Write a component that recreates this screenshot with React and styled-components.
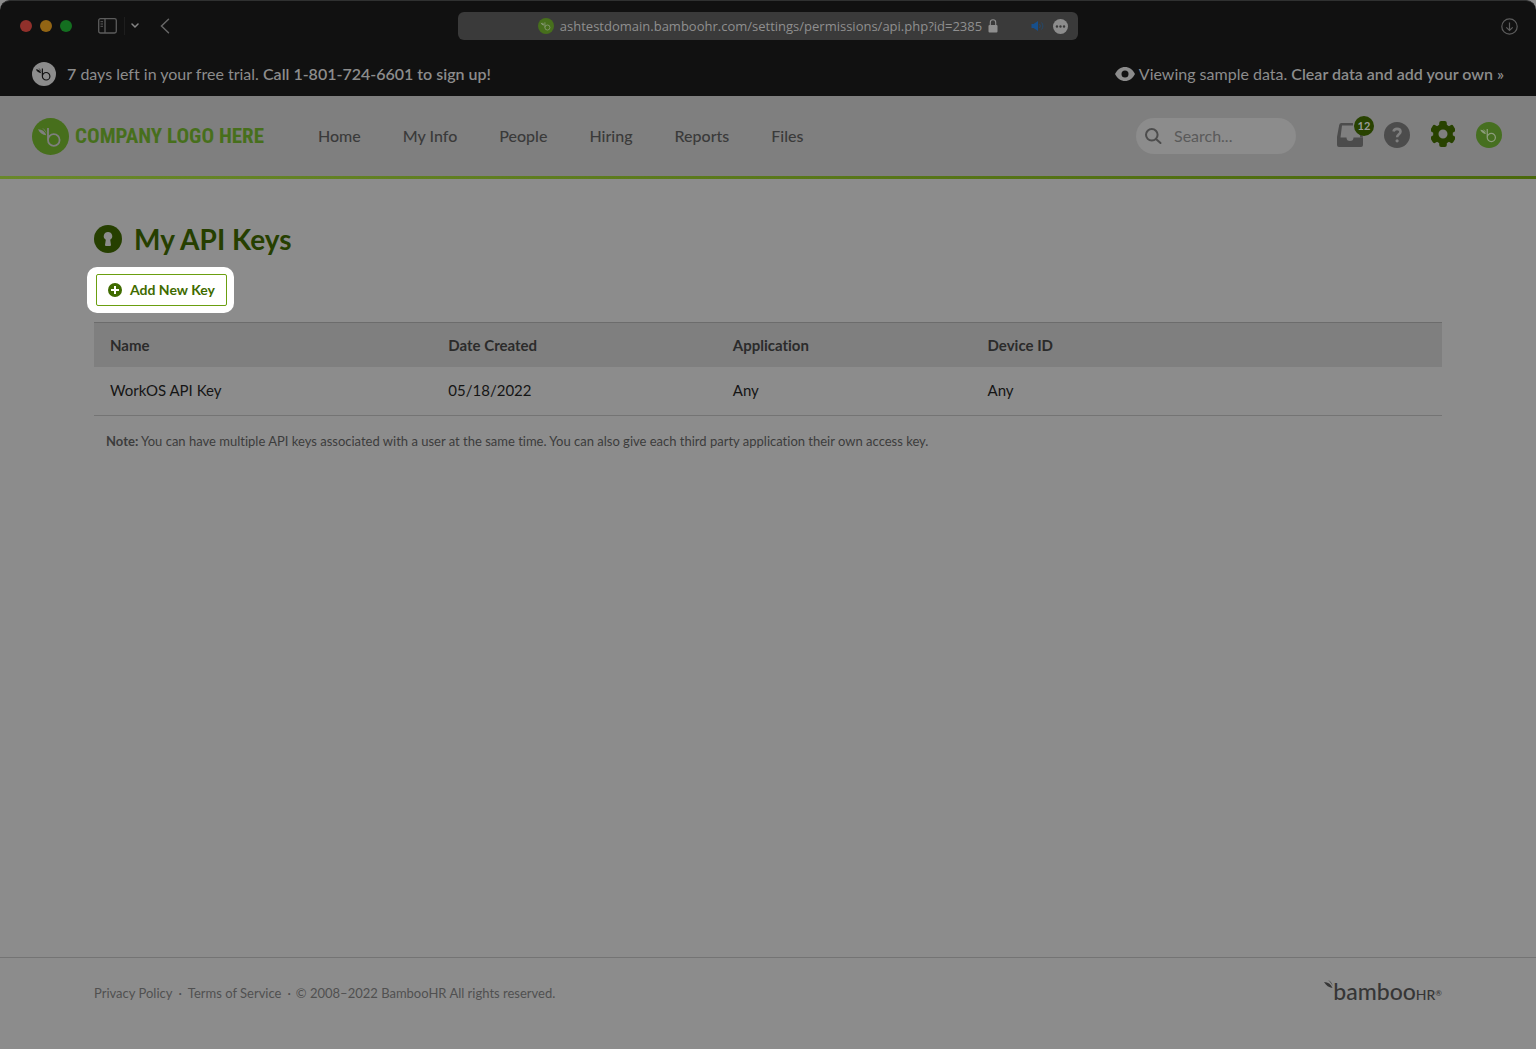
import React from 'react';
import styled, { createGlobalStyle } from 'styled-components';

const GlobalStyle = createGlobalStyle`
  * {
    box-sizing: border-box;
  }

  body {
    margin: 0;
    background: #8c8c8c;
    font-family: Lato, sans-serif;
    font-size: 16px;
    font-variant-ligatures: no-common-ligatures;
    line-height: 20px;
    color: #151515;
  }

  a {
    color: inherit;
    text-decoration: none;
  }

  button, input {
    font-family: inherit;
  }

  svg {
    display: block;
    flex: none;
  }
`;

const Page = styled.div`
  min-height: 100vh;
  display: flex;
  flex-direction: column;
`;

const TopArea = styled.div`
  background: #111;
  border-top: 1px solid #303131;
  border-radius: 10px 10px 0 0;
`;

const BrowserBar = styled.div`
  height: 50px;
  padding: 0 18px;
  display: grid;
  grid-template-columns: 1fr minmax(0, 620px) 1fr;
  align-items: center;
`;

const BarLeft = styled.div`
  padding-left: 2px;
  display: flex;
  align-items: center;
`;

const Lights = styled.div`
  display: flex;
  gap: 8px;
  margin-right: 26px;
`;

const Light = styled.span`
  width: 12px;
  height: 12px;
  border-radius: 50%;
  background: ${({ $color }) => $color};
`;

const IconButton = styled.button`
  display: flex;
  padding: 0;
  border: 0;
  background: none;
  color: ${({ $color }) => $color || '#5c5c5c'};
`;

const BarDivider = styled.span`
  width: 1px;
  height: 18px;
  margin: 0 6px 0 7px;
  background: #1e1e1e;
`;

const BackButton = styled(IconButton)`
  margin-left: 21px;
`;

const DownloadButton = styled(IconButton)`
  justify-self: end;
`;

const AddressBar = styled.div`
  height: 28px;
  padding: 0 10px;
  border-radius: 6px;
  background: #3a3a3a;
  color: #8f8f8f;
  display: grid;
  grid-template-columns: 38px 1fr 38px;
  align-items: center;
`;

const Address = styled.div`
  grid-column: 2;
  display: flex;
  align-items: center;
  justify-content: center;
  gap: 6px;
  font-family: 'Open Sans', sans-serif;
  font-size: 13px;
  font-weight: 500;
  white-space: nowrap;
`;

const AddressTools = styled.div`
  display: flex;
  align-items: center;
  justify-content: flex-end;
  gap: 8px;
`;

const TrialBar = styled.div`
  height: 45px;
  padding: 1px 32px 0;
  display: flex;
  align-items: center;
  justify-content: space-between;
  color: #8c8c8c;
`;

const TrialText = styled.div`
  display: flex;
  align-items: center;
  gap: ${({ $gap }) => $gap};

  strong, a {
    font-weight: 600;
  }
`;

const Header = styled.header`
  height: 83px;
  padding: 0 34px 0 32px;
  display: flex;
  align-items: center;
  background: #7f7f7f;
  border-bottom: 3px solid;
  border-image: linear-gradient(to right, #69882a, #4a690b) 1;
`;

const Logo = styled.a`
  width: 286px;
  display: flex;
  align-items: center;
  gap: 6px;
  color: #476f1c;
  font-family: 'Roboto Condensed', 'Liberation Sans Narrow', 'Liberation Sans', sans-serif;
  font-size: 21px;
  font-weight: 700;
  line-height: 36px;
  white-space: nowrap;
`;

const Nav = styled.nav`
  flex: 1;
  display: flex;
  gap: 42px;
  color: #3a3a3a;
  font-weight: 500;
  white-space: nowrap;
`;

const Search = styled.label`
  width: 160px;
  height: 36px;
  padding: 0 9px;
  display: flex;
  align-items: center;
  gap: 12px;
  border-radius: 18px;
  background: #8c8c8c;
  color: #545454;

  input {
    width: 100%;
    min-width: 0;
    padding: 0;
    border: 0;
    outline: 0;
    background: none;
    color: inherit;
    font-size: 16px;
    line-height: 20px;
  }

  input::placeholder {
    color: #5a5a5a;
    opacity: 1;
  }
`;

const HeaderIcons = styled.div`
  margin: 0 0 2px 41px;
  display: flex;
  align-items: center;
  gap: 21px;
`;

const InboxButton = styled(IconButton)`
  position: relative;
`;

const Badge = styled.span`
  position: absolute;
  top: -6px;
  right: -11px;
  width: 20px;
  height: 20px;
  border-radius: 50%;
  background: #284200;
  color: #9a9a9a;
  font-size: 11px;
  font-weight: 700;
  line-height: 20px;
  text-align: center;
`;

const Main = styled.main`
  flex: 1;
  padding: 42px 94px 0;
`;

const Title = styled.h1`
  margin: 0;
  display: flex;
  align-items: center;
  gap: 12px;
  color: #263f00;
  font-size: 28px;
  font-weight: 700;
  line-height: 36px;
`;

const Spotlight = styled.div`
  width: fit-content;
  margin: 10px 0 9px -7px;
  padding: 7px 7px 7px 9px;
  border-radius: 10px;
  background: #fff;
`;

const AddButton = styled.button`
  height: 32px;
  padding: 0 11px;
  display: flex;
  align-items: center;
  gap: 8px;
  border: 1px solid #6b9f10;
  border-radius: 2px;
  background: #fff;
  color: #3f6b00;
  font-size: 14px;
  font-weight: 700;
  line-height: 20px;
`;

const KeyTable = styled.table`
  width: 100%;
  table-layout: fixed;
  border-collapse: separate;
  border-spacing: 0;
  font-size: 15px;
  text-align: left;

  th, td {
    padding: 0 16px;
  }

  th {
    height: 45px;
    border-top: 1px solid #6c6c6c;
    background: #7f7f7f;
    color: #2b2b2b;
    font-weight: 700;
  }

  td {
    height: 49px;
    padding-bottom: 2px;
    border-bottom: 1px solid #747474;
  }
`;

const Col = styled.col`
  width: ${({ $width }) => $width};
`;

const Note = styled.p`
  margin: 15px 12px;
  color: #3c3c3c;
  font-size: 13px;
  line-height: 20px;

  strong {
    font-weight: 700;
  }
`;

const Footer = styled.footer`
  height: 92px;
  padding: 0 94px 22px;
  display: flex;
  align-items: center;
  justify-content: space-between;
  border-top: 1px solid #747474;
  color: #505050;
  font-size: 13px;
`;

const Legal = styled.div`
  display: flex;
  gap: 6px;
`;

const Copyright = styled.span`
  display: flex;
  gap: 5px;
`;

const Wordmark = styled.a`
  display: flex;
  align-items: baseline;
  color: #363636;
  font-size: 23px;
  font-weight: 500;
  line-height: 24px;

  small {
    font-size: 14px;
  }

  sup {
    align-self: center;
    font-size: 8px;
    line-height: 8px;
  }
`;

const Leaves = styled.svg`
  align-self: flex-start;
`;

const BambooMark = ({ size, bg, fg }) => (
  <svg width={size} height={size} viewBox="0 0 37 37" aria-hidden="true">
    <circle cx="18.5" cy="18.5" r="18.5" fill={bg} />
    <path d="M16 10v12a5.8 5.8 0 1 0 5.8-5.8A5.8 5.8 0 0 0 16 22" fill="none" stroke={fg} strokeWidth="1.8" />
    <path d="M6 11.2c4 .2 7 2 8.2 6-3.6-.2-6.6-2.2-8.2-6zM9.8 9.8c2.6 1 4.2 3 4.8 6-1.2-2.4-2.8-4.2-4.8-6z" fill={fg} />
  </svg>
);

const navItems = ['Home', 'My Info', 'People', 'Hiring', 'Reports', 'Files'];

const gearTeeth = [0, 60, 120, 180, 240, 300];

const columns = [
  { label: 'Name', width: '25.1%' },
  { label: 'Date Created', width: '21.1%' },
  { label: 'Application', width: '18.9%' },
  { label: 'Device ID' },
];

const keys = [['WorkOS API Key', '05/18/2022', 'Any', 'Any']];

const App = () => {
  return (
    <>
      <GlobalStyle />
      <Page>
        <TopArea>
          <BrowserBar>
            <BarLeft>
              <Lights>
                <Light $color="#91302b" />
                <Light $color="#936514" />
                <Light $color="#146f20" />
              </Lights>
              <IconButton aria-label="Sidebar">
                <svg width="19" height="16" viewBox="0 0 19 16" fill="none" stroke="currentColor">
                  <rect x="0.7" y="0.7" width="17.6" height="14.3" rx="1.8" strokeWidth="1.3" />
                  <path d="M7 1v14" strokeWidth="1.3" />
                  <path d="M2.5 3.7H5M2.5 6H5M2.5 8.3H5" />
                </svg>
              </IconButton>
              <BarDivider />
              <IconButton aria-label="Tab groups" $color="#858585">
                <svg width="8" height="6" viewBox="0 0 8 6" fill="none" stroke="currentColor" strokeWidth="1.5" strokeLinecap="round">
                  <path d="M1 1l3 3 3-3" />
                </svg>
              </IconButton>
              <BackButton aria-label="Back" $color="#666">
                <svg width="10" height="16" viewBox="0 0 10 16" fill="none" stroke="currentColor" strokeWidth="1.5" strokeLinecap="round">
                  <path d="M8.5 1.2L1.5 8l7 6.8" />
                </svg>
              </BackButton>
            </BarLeft>
            <AddressBar>
              <Address>
                <BambooMark size={16} bg="#476f1c" fg="#8c9c7c" />
                <span>ashtestdomain.bamboohr.com/settings/permissions/api.php?id=2385</span>
                <svg width="10" height="14" viewBox="0 0 10 14">
                  <rect x="0.5" y="6" width="9" height="7.5" rx="1" fill="currentColor" />
                  <path d="M2.3 6.5v-3a2.7 2.7 0 0 1 5.4 0v3" fill="none" stroke="currentColor" strokeWidth="1.1" />
                </svg>
              </Address>
              <AddressTools>
                <svg width="14" height="12" viewBox="0 0 14 12" fill="#174f8b">
                  <path d="M.5 4h2l4.5-3v10l-4.500-3h-2z" />
                  <path d="M8.5 4a3 3 0 0 1 0 4M10.5 2.500a5 5 0 0 1 0 7" fill="none" stroke="#24486b" />
                </svg>
                <IconButton aria-label="More" $color="#8c8c8c">
                  <svg width="15" height="15" viewBox="0 0 14 14">
                    <circle cx="7" cy="7" r="7" fill="currentColor" />
                    <g fill="#3a3a3a">
                      <circle cx="3.7" cy="7" r="1.1" />
                      <circle cx="7" cy="7" r="1.1" />
                      <circle cx="10.3" cy="7" r="1.1" />
                    </g>
                  </svg>
                </IconButton>
              </AddressTools>
            </AddressBar>
            <DownloadButton aria-label="Downloads">
              <svg width="17" height="17" viewBox="0 0 17 17" fill="none" stroke="currentColor" strokeWidth="1.2">
                <circle cx="8.5" cy="8.5" r="7.7" />
                <path d="M8.5 4.5v8M5.3 9.3l3.2 3.2 3.2-3.2" />
              </svg>
            </DownloadButton>
          </BrowserBar>
          <TrialBar>
            <TrialText $gap="11px">
              <BambooMark size={24} bg="#8c8c8c" fg="#111" />
              <span><strong>7</strong> days left in your free trial. <strong>Call 1-801-724-6601 to sign up!</strong></span>
            </TrialText>
            <TrialText $gap="4px">
              <svg width="20" height="14" viewBox="0 0 20 14" fill="none">
                <path d="M0 7C2.3 2.5 5.8 0 10 0s7.7 2.5 10 7c-2.3 4.5-5.8 7-10 7S2.3 11.5 0 7z" fill="#8c8c8c" />
                <circle cx="10" cy="7" r="3.5" fill="#111" />
              </svg>
              <span>Viewing sample data. <a href="#clear">Clear data and add your own »</a></span>
            </TrialText>
          </TrialBar>
        </TopArea>

        <Header>
          <Logo href="#home">
            <BambooMark size={37} bg="#476f1c" fg="#7f7f7f" />
            COMPANY LOGO HERE
          </Logo>
          <Nav>
            {navItems.map((item) => (
              <a key={item} href="#nav">{item}</a>
            ))}
          </Nav>
          <Search>
            <svg width="17" height="17" viewBox="0 0 17 17" fill="none" stroke="#4c4c4c" strokeWidth="2">
              <circle cx="6.8" cy="6.8" r="5.8" />
              <path d="M11 11l4.500 4" strokeLinecap="round" />
            </svg>
            <input type="text" placeholder="Search..." aria-label="Search" />
          </Search>
          <HeaderIcons>
            <InboxButton aria-label="Inbox" $color="#4c4c4c">
              <svg width="26" height="26" viewBox="0 0 26 26">
                <path d="M16 1H4.500Q2.500 1 2.200 3L0 15v8q0 2 2 2h22q2 0 2-2v-7.500h-9.500a3.500 3.500 0 0 1-7 0H3.500L5 3.600h11z" fill="currentColor" />
                <path d="M22.500 10h2.300l1.200 5.500h-2.800z" fill="currentColor" />
              </svg>
              <Badge>12</Badge>
            </InboxButton>
            <IconButton aria-label="Help">
              <svg width="26" height="26" viewBox="0 0 26 26" fill="none">
                <circle cx="13" cy="13" r="13" fill="#4c4c4c" />
                <path d="M9.500 9.500c.4-1.700 1.700-2.600 3.500-2.600 2 0 3.500 1.100 3.500 2.900 0 2.500-3.400 2.500-3.400 5.400" stroke="#7f7f7f" strokeWidth="2.6" />
                <circle cx="13.1" cy="18.8" r="1.6" fill="#7f7f7f" />
              </svg>
            </IconButton>
            <IconButton aria-label="Settings" $color="#284200">
              <svg width="24" height="28" viewBox="-12 -13 24 28">
                <circle r="7.2" fill="none" stroke="currentColor" strokeWidth="5.4" />
                {gearTeeth.map((angle) => (
                  <rect key={angle} x="-3.800" y="-13" width="7.600" height="6.500" rx="2" fill="currentColor" transform={`rotate(${angle})`} />
                ))}
              </svg>
            </IconButton>
            <IconButton aria-label="Account">
              <BambooMark size={26} bg="#466f20" fg="#8c9c7c" />
            </IconButton>
          </HeaderIcons>
        </Header>

        <Main>
          <Title>
            <svg width="28" height="28" viewBox="0 0 28 28">
              <circle cx="14" cy="14" r="14" fill="#263f00" />
              <path d="M14 7a4.200 4.200 0 0 0-2.200 7.800L11 20q0 1 1 1h4q1 0 1-1l-.8-5.200A4.200 4.200 0 0 0 14 7z" fill="#8c8c8c" />
            </svg>
            My API Keys
          </Title>
          <Spotlight>
            <AddButton>
              <svg width="14" height="14" viewBox="0 0 14 14">
                <circle cx="7" cy="7" r="7" fill="currentColor" />
                <path d="M7 3v8M3 7h8" stroke="#fff" strokeWidth="2" />
              </svg>
              Add New Key
            </AddButton>
          </Spotlight>
          <KeyTable>
            <colgroup>
              {columns.map(({ label, width }) => (
                <Col key={label} $width={width} />
              ))}
            </colgroup>
            <thead>
              <tr>
                {columns.map(({ label }) => (
                  <th key={label} scope="col">{label}</th>
                ))}
              </tr>
            </thead>
            <tbody>
              {keys.map((row) => (
                <tr key={row[0]}>
                  {row.map((cell, i) => (
                    <td key={i}>{cell}</td>
                  ))}
                </tr>
              ))}
            </tbody>
          </KeyTable>
          <Note>
            <strong>Note:</strong> You can have multiple API keys associated with a user at the same time. You can also give each third party application their own access key.
          </Note>
        </Main>

        <Footer>
          <Legal>
            <a href="#privacy">Privacy Policy</a>
            <span>·</span>
            <a href="#terms">Terms of Service</a>
            <Copyright>
              <span>·</span>
              <span>© 2008–2022 BambooHR All rights reserved.</span>
            </Copyright>
          </Legal>
          <Wordmark href="#bamboohr" aria-label="BambooHR">
            <Leaves width="9" height="10" viewBox="0 -1 9 10">
              <path d="M0 2c4 0 7 2 8.500 6C5 7.500 2 5.500 0 2zM4 0c2.500 1 4 3 4.700 6C7.500 3.500 6 1.500 4 0z" fill="currentColor" />
            </Leaves>
            <span>bamboo</span>
            <small>HR</small>
            <sup>®</sup>
          </Wordmark>
        </Footer>
      </Page>
    </>
  );
};

export default App;
